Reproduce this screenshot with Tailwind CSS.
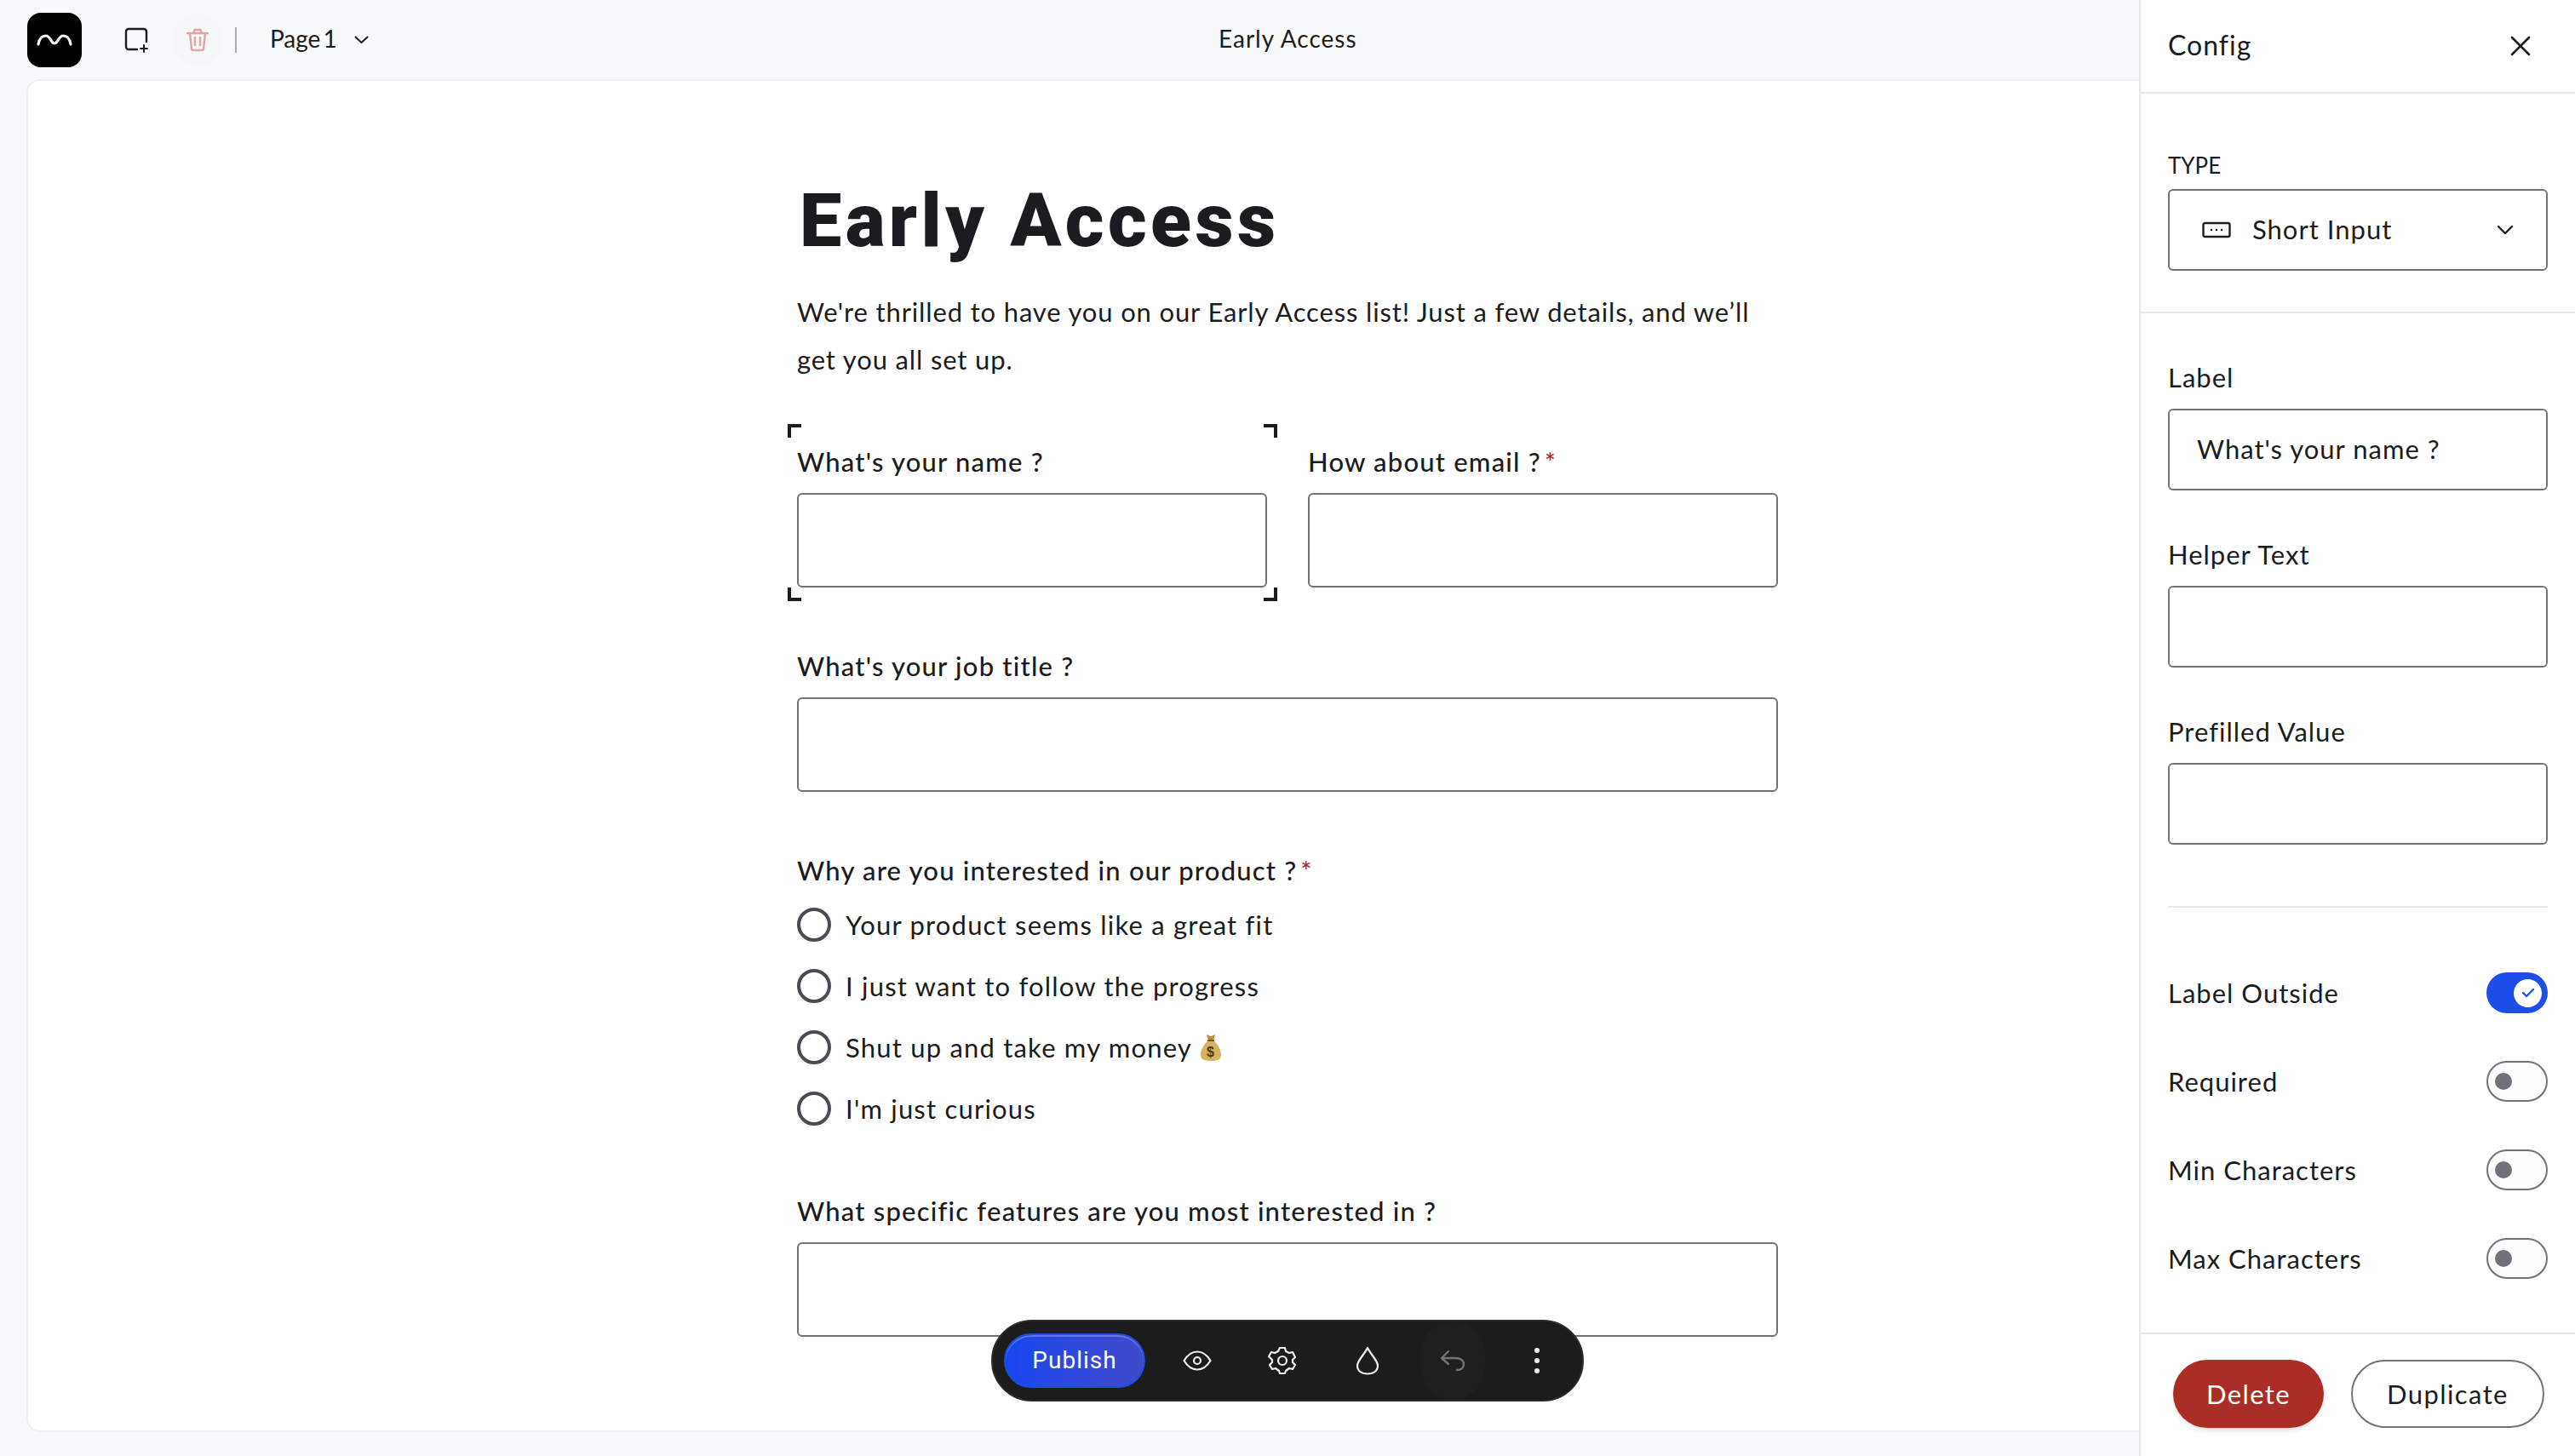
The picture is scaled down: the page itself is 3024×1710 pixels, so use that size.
<!DOCTYPE html>
<html lang="en">
<head>
  <meta charset="UTF-8" />
  <title>Early Access</title>
  <script src="https://cdn.jsdelivr.net/npm/@tailwindcss/browser@4"></script>
</head>
<body class="bg-[#f8f9fb] text-[#1c1c20] font-['Lato',sans-serif]">
  <div class="flex w-[3024px] h-[1710px] overflow-hidden">
    <!-- editor -->
    <main class="w-[2512px] h-full flex flex-col">
      <header class="h-[93px] flex items-center shrink-0">
        <div class="w-[1431px] flex items-center pl-[32px]">
          <div class="w-[64px] h-[64px] rounded-[16px] bg-black flex items-center justify-center">
            <svg width="42" height="14" viewBox="0 0 42 14" fill="none" stroke="#fff" stroke-width="3.2" stroke-linecap="round"><path d="M2 12C3 5 7 2 11 2c5 0 6 9 10 9s5-9 10-9c4 0 8 3 9 10"/></svg>
          </div>
          <svg class="ml-[50px]" width="30" height="30" viewBox="0 0 30 30" fill="none" stroke="#1c1c20" stroke-width="2.4" stroke-linecap="round"><path d="M15 26H5a3 3 0 0 1-3-3V5a3 3 0 0 1 3-3h18a3 3 0 0 1 3 3v12"/><path d="M19 25h8M23 21v8" stroke-width="2"/></svg>
          <div class="ml-[26px] w-[60px] h-[60px] rounded-full bg-[#f6f7f9] flex items-center justify-center">
            <svg width="26" height="28" viewBox="0 0 26 28" fill="none" stroke="#e0a7a2" stroke-width="2.4" stroke-linecap="round" stroke-linejoin="round"><path d="M1 6h24M4 6l2 18a2 2 0 0 0 2 2h10a2 2 0 0 0 2-2l2-18M9 6V3a1 1 0 0 1 1-1h6a1 1 0 0 1 1 1v3M10 11v9M16 11v9"/></svg>
          </div>
          <div class="ml-[14px] w-[2px] h-[30px] bg-[#a9abb0]"></div>
          <span class="ml-[39px] mb-[3px] text-[28px] leading-none [word-spacing:-4px]">Page 1</span>
          <svg class="ml-[20px]" width="17" height="10" viewBox="0 0 17 10" fill="none" stroke="#1c1c20" stroke-width="2" stroke-linecap="round" stroke-linejoin="round"><path d="M1.5 1.5 8.5 8l7-6.500"/></svg>
        </div>
        <span class="mb-[3px] text-[28px] leading-none tracking-[1px]">Early Access</span>
      </header>

      <section class="relative ml-[31px] h-[1589px] bg-white border-2 border-r-0 border-[#eff0f4] rounded-l-[16px] overflow-hidden shrink-0">
        <div class="ml-[903px] w-[1152px] text-[31px] tracking-[1.200px]">
          <h1 class="mt-[104px] ml-[3px] h-[120px] flex items-center text-[88px] leading-none font-black font-['Roboto',sans-serif] tracking-[4.400px] text-[#1c1c20]">Early Access</h1>
          <p class="mt-[19px] leading-[56px] tracking-[0.850px]">We're thrilled to have you on our Early Access list! Just a few details, and we’ll<br>get you all set up.</p>

          <div class="mt-[74px] grid grid-cols-2 gap-x-[48px]">
            <div class="relative">
              <label class="block h-[36px] mb-[19px] leading-[36px] font-medium">What's your name ?</label>
              <div class="h-[111px] border-2 border-[#71717a] rounded-[6px]"></div>
              <span class="absolute left-[-11px] top-[-26px] w-[16px] h-[16px] border-t-4 border-l-4 border-[#1c1c20]"></span>
              <span class="absolute right-[-12px] top-[-26px] w-[16px] h-[16px] border-t-4 border-r-4 border-[#1c1c20]"></span>
              <span class="absolute left-[-11px] bottom-[-16px] w-[16px] h-[16px] border-b-4 border-l-4 border-[#1c1c20]"></span>
              <span class="absolute right-[-12px] bottom-[-16px] w-[16px] h-[16px] border-b-4 border-r-4 border-[#1c1c20]"></span>
            </div>
            <div>
              <label class="block h-[36px] mb-[19px] leading-[36px] font-medium">How about email ?<span class="text-[#b3261e] ml-[4px] text-[30px]">*</span></label>
              <div class="h-[111px] border-2 border-[#71717a] rounded-[6px]"></div>
            </div>
          </div>

          <div class="mt-[74px]">
            <label class="block h-[36px] mb-[19px] leading-[36px] font-medium">What's your job title ?</label>
            <div class="h-[111px] border-2 border-[#71717a] rounded-[6px]"></div>
          </div>

          <div class="mt-[74px]">
            <label class="block h-[36px] mb-[26px] leading-[36px] font-medium">Why are you interested in our product ?<span class="text-[#b3261e] ml-[4px] text-[30px]">*</span></label>
            <div class="flex flex-col gap-[32px]">
              <div class="flex items-center h-[40px]"><span class="w-[40px] h-[40px] rounded-full border-4 border-[#4b4b55] mr-[17px]"></span>Your product seems like a great fit</div>
              <div class="flex items-center h-[40px]"><span class="w-[40px] h-[40px] rounded-full border-4 border-[#4b4b55] mr-[17px]"></span>I just want to follow the progress</div>
              <div class="flex items-center h-[40px]"><span class="w-[40px] h-[40px] rounded-full border-4 border-[#4b4b55] mr-[17px]"></span>Shut up and take my money
                <svg class="ml-[10px]" width="24" height="32" viewBox="0 0 24 32"><path d="M7 1l5 2 5-2-2 7H9z" fill="#b98f3c"/><path d="M9 8h6c5 4 9 11 9 17 0 5-4 7-12 7S0 30 0 25C0 19 4 12 9 8z" fill="#d9b25f"/><path d="M8 8h8" stroke="#7a5a20" stroke-width="2"/><text x="12" y="27" text-anchor="middle" font-size="16" font-weight="700" font-family="Liberation Sans" fill="#4a3a1a">$</text></svg>
              </div>
              <div class="flex items-center h-[40px]"><span class="w-[40px] h-[40px] rounded-full border-4 border-[#4b4b55] mr-[17px]"></span>I'm just curious</div>
            </div>
          </div>

          <div class="mt-[82px]">
            <label class="block h-[36px] mb-[19px] leading-[36px] font-medium">What specific features are you most interested in ?</label>
            <div class="h-[111px] border-2 border-[#71717a] rounded-[6px]"></div>
          </div>
        </div>

        <!-- floating toolbar -->
        <div class="absolute left-[1131px] top-[1455px] w-[696px] h-[96px] rounded-full bg-[#1b1c1b] border-2 border-[#2e2a25] flex items-center pl-[13px]">
          <button class="w-[166px] h-[64px] rounded-full bg-gradient-to-r from-[#1746f0] to-[#3f4bcc] border-2 border-[#1d4ed8] text-white text-[28px] tracking-[1px] font-['Roboto',sans-serif] shadow-[inset_0_2px_0_rgba(255,255,255,0.25)]">Publish</button>
          <svg class="ml-[44px]" width="34" height="24" viewBox="0 0 34 24" fill="none" stroke="#eee" stroke-width="2.2"><path d="M1.500 12C6 4.500 11 1.500 17 1.500S28 4.500 32.500 12C28 19.500 23 22.500 17 22.500S6 19.500 1.500 12z"/><circle cx="17" cy="12" r="4"/></svg>
          <svg class="ml-[66px]" width="34" height="34" viewBox="0 0 34 34" fill="none" stroke="#eee" stroke-width="2.2" stroke-linejoin="round"><path d="M14 2h6l1 4 4 2 4-1 3 6-3 3v3l3 3-3 5-4-1-4 3-1 3h-6l-1-3-4-3-4 1-3-5 3-3v-3L1 12l3-5 4 1 4-2z"/><circle cx="17" cy="17" r="5"/></svg>
          <svg class="ml-[69px]" width="28" height="34" viewBox="0 0 28 34" fill="none" stroke="#eee" stroke-width="2.2" stroke-linejoin="round"><path d="M14 2C10 10 2 17 2 23c0 6 5 9.500 12 9.500s12-3.500 12-9.500C26 17 18 10 14 2z"/></svg>
          <div class="ml-[48px] w-[76px] h-[92px] rounded-full bg-[#1e1f1e] flex items-center justify-center">
            <svg width="30" height="26" viewBox="0 0 30 26" fill="none" stroke="#737373" stroke-width="2.4" stroke-linecap="round" stroke-linejoin="round"><path d="M10 2 2 10l8 7M2 10h17c5 0 9 3 9 7s-3 7-8 7"/></svg>
          </div>
          <div class="ml-[58px] flex flex-col gap-[6px]">
            <span class="w-[6px] h-[6px] rounded-full bg-[#eee]"></span>
            <span class="w-[6px] h-[6px] rounded-full bg-[#eee]"></span>
            <span class="w-[6px] h-[6px] rounded-full bg-[#eee]"></span>
          </div>
        </div>
      </section>
    </main>

    <!-- config panel -->
    <aside class="w-[512px] h-full bg-white border-l-2 border-[#e8e9ef] flex flex-col text-[31px] tracking-[1px]">
      <div class="h-[110px] shrink-0 border-b-2 border-[#e8e9ef] flex items-center justify-between pl-[32px] pr-[52px]">
        <span class="text-[32px] mb-[2px]">Config</span>
        <svg width="24" height="24" viewBox="0 0 24 24" fill="none" stroke="#1c1c20" stroke-width="2.600" stroke-linecap="round"><path d="M2 2l20 20M22 2 2 22"/></svg>
      </div>
      <div class="h-[258px] shrink-0 border-b-2 border-[#e8e9ef] pl-[32px] pr-[32px] pt-[66px]">
        <div class="h-[36px] text-[26px] leading-[36px] tracking-normal mb-[10px]">TYPE</div>
        <div class="h-[96px] border-2 border-[#71717a] rounded-[6px] flex items-center pl-[38px] pr-[38px]">
          <svg width="34" height="20" viewBox="0 0 34 20" fill="none" stroke="#1c1c20" stroke-width="2.400"><rect x="1.500" y="2" width="31" height="16" rx="2"/><path d="M11 10h.1M17 10h.1M23 10h.1" stroke-linecap="round"/></svg>
          <span class="ml-[25px] flex-1 mb-[1px]">Short Input</span>
          <svg width="20" height="12" viewBox="0 0 20 12" fill="none" stroke="#1c1c20" stroke-width="2.400" stroke-linecap="round" stroke-linejoin="round"><path d="M2 2l8 8 8-8"/></svg>
        </div>
      </div>
      <div class="pl-[32px] pr-[32px] pt-[58px] flex flex-col gap-[58px] shrink-0">
        <div>
          <div class="h-[36px] leading-[36px] mb-[18px] -translate-y-[1px]">Label</div>
          <div class="h-[96px] border-2 border-[#71717a] rounded-[6px] flex items-center pl-[32px] pb-[1px]">What's your name ?</div>
        </div>
        <div>
          <div class="h-[36px] leading-[36px] mb-[18px] -translate-y-[1px]">Helper Text</div>
          <div class="h-[96px] border-2 border-[#71717a] rounded-[6px]"></div>
        </div>
        <div>
          <div class="h-[36px] leading-[36px] mb-[18px] -translate-y-[1px]">Prefilled Value</div>
          <div class="h-[96px] border-2 border-[#71717a] rounded-[6px]"></div>
        </div>
      </div>
      <div class="ml-[32px] mr-[32px] mt-[72px] border-t-2 border-[#e8e9ef] pt-[76px] flex flex-col gap-[56px] shrink-0">
        <div class="flex items-center justify-between h-[48px]">Label Outside
          <span class="w-[72px] h-[48px] rounded-full bg-[#1c4ee8] flex items-center justify-end pr-[7px]">
            <span class="w-[33px] h-[33px] rounded-full bg-white flex items-center justify-center">
              <svg width="16" height="12" viewBox="0 0 16 12" fill="none" stroke="#1c4ee8" stroke-width="2.400" stroke-linecap="round" stroke-linejoin="round"><path d="M2 6l4 4 8-8"/></svg>
            </span>
          </span>
        </div>
        <div class="flex items-center justify-between h-[48px]">Required
          <span class="w-[72px] h-[48px] rounded-full bg-[#fdfdfe] border-2 border-[#71717a] flex items-center pl-[8px]"><span class="w-[20px] h-[20px] rounded-full bg-[#71717a]"></span></span>
        </div>
        <div class="flex items-center justify-between h-[48px]">Min Characters
          <span class="w-[72px] h-[48px] rounded-full bg-[#fdfdfe] border-2 border-[#71717a] flex items-center pl-[8px]"><span class="w-[20px] h-[20px] rounded-full bg-[#71717a]"></span></span>
        </div>
        <div class="flex items-center justify-between h-[48px]">Max Characters
          <span class="w-[72px] h-[48px] rounded-full bg-[#fdfdfe] border-2 border-[#71717a] flex items-center pl-[8px]"><span class="w-[20px] h-[20px] rounded-full bg-[#71717a]"></span></span>
        </div>
      </div>
      <div class="mt-[63px] border-t-2 border-[#e8e9ef] flex-1 flex pl-[38px] pt-[30px] gap-[32px] items-start tracking-[1.400px]">
        <button class="w-[177px] h-[80px] rounded-full bg-[#ab2e26] text-white shadow-md">Delete</button>
        <button class="w-[227px] h-[80px] rounded-full border-2 border-[#71717a]">Duplicate</button>
      </div>
    </aside>
  </div>
</body>
</html>
